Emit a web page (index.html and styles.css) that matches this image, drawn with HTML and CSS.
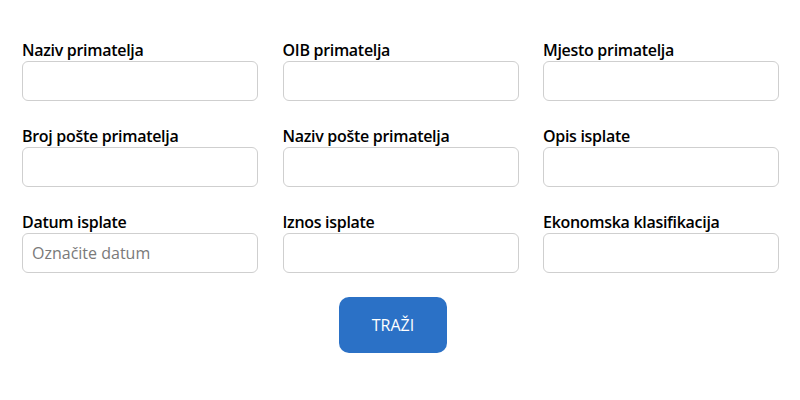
FILE: index.html
```html
<!DOCTYPE html>
<html lang="hr">
<head>
<meta charset="utf-8">
<link rel="stylesheet" href="styles.css">
</head>
<body>
<form class="search">
  <div class="grid">
    <div class="field"><label>Naziv primatelja</label><input type="text"></div>
    <div class="field"><label>OIB primatelja</label><input type="text"></div>
    <div class="field"><label>Mjesto primatelja</label><input type="text"></div>
    <div class="field"><label>Broj pošte primatelja</label><input type="text"></div>
    <div class="field"><label>Naziv pošte primatelja</label><input type="text"></div>
    <div class="field"><label>Opis isplate</label><input type="text"></div>
    <div class="field"><label>Datum isplate</label><input type="text" placeholder="Označite datum"></div>
    <div class="field"><label>Iznos isplate</label><input type="text"></div>
    <div class="field"><label>Ekonomska klasifikacija</label><input type="text"></div>
  </div>
  <div class="actions"><button type="button" class="btn">TRAŽI</button></div>
</form>
</body>
</html>
```

FILE: styles.css
```css
html, body {
  margin: 0;
  padding: 0;
  background: #fff;
}
body {
  font-family: "Open Sans", "Liberation Sans", sans-serif;
  color: #111;
}
.search {
  padding: 40px 21px 0 22px;
}
.grid {
  display: grid;
  grid-template-columns: repeat(3, 1fr);
  column-gap: 24.5px;
  row-gap: 25px;
}
.field {
  display: flex;
  flex-direction: column;
}
.field label {
  font-size: 16px;
  font-weight: 600;
  line-height: 21px;
  color: #000;
  letter-spacing: -0.3px;
}
.field input {
  box-sizing: border-box;
  height: 40px;
  width: 100%;
  border: 1px solid #cfcfcf;
  border-radius: 6px;
  padding: 0 9px;
  font-family: inherit;
  font-size: 16px;
  color: #333;
  background: #fff;
  outline: none;
}
.field input::placeholder {
  color: #7a7a7a;
}
.actions {
  display: flex;
  padding-left: 317px;
  margin-top: 24px;
}
.btn {
  width: 108px;
  height: 56px;
  border: none;
  border-radius: 10px;
  background: #2b71c6;
  color: #fff;
  font-family: inherit;
  font-size: 16px;
  font-weight: 400;
  cursor: pointer;
}
```
